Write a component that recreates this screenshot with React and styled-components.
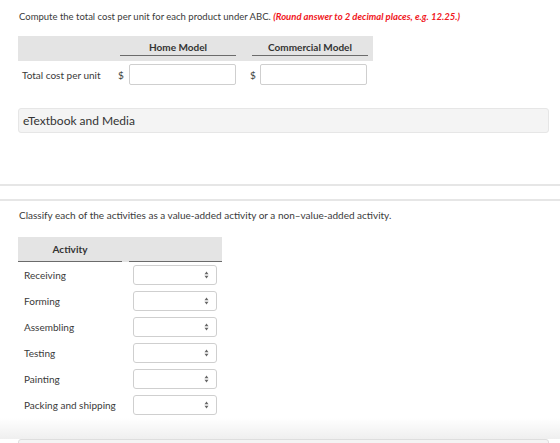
import React from 'react';
import styled, { createGlobalStyle } from 'styled-components';

const GlobalStyle = createGlobalStyle`
  html, body {
    margin: 0;
    padding: 0;
    background: #fff;
  }
  body {
    font-family: Lato, "Open Sans", Arial, sans-serif;
    color: #333;
    width: 560px;
    height: 443px;
    overflow: hidden;
  }
`;

const Page = styled.div`
  display: flex;
  flex-direction: column;
`;

const Prompt = styled.p`
  margin: 0;
  padding: ${(p) => p.$pad};
  font-size: ${(p) => p.$size || 9.5}px;
  line-height: 12px;
  color: #3a3a3a;
`;

const Hint = styled.span`
  color: #f0161c;
  font-style: italic;
  font-weight: 700;
`;

const CostTable = styled.div`
  margin: 13px 0 0 18px;
  width: 355px;
`;

const HeadBar = styled.div`
  display: flex;
  align-items: flex-end;
  height: 25px;
  background: #e4e4e4;
  padding-bottom: 5px;
  box-sizing: border-box;
`;

const HeadCell = styled.div`
  width: ${(p) => p.$w}px;
  margin-left: ${(p) => p.$ml || 0}px;
  text-align: center;
  font-size: 10px;
  font-weight: 700;
  color: #333;
  line-height: 12px;
  padding-bottom: 2px;
  border-bottom: 1.5px solid #6b6b6b;
`;

const CostRow = styled.div`
  display: flex;
  align-items: center;
  height: 27px;
`;

const RowLabel = styled.div`
  width: 95px;
  padding-left: 4px;
  box-sizing: border-box;
  font-size: 10px;
  color: #3a3a3a;
`;

const Dollar = styled.span`
  width: ${(p) => p.$w}px;
  margin-left: ${(p) => p.$ml}px;
  font-size: 10px;
  color: #3a3a3a;
`;

const MoneyInput = styled.div`
  width: 107px;
  height: 21px;
  box-sizing: border-box;
  border: 1px solid #cfcfcf;
  border-radius: 2px;
  background: #fff;
`;

const MediaBox = styled.div`
  margin: 20px 11px 0 18px;
  height: 25px;
  box-sizing: border-box;
  display: flex;
  align-items: center;
  padding-left: 4px;
  background: #f4f4f4;
  border: 1px solid #e6e6e6;
  border-radius: 3px;
  font-size: 12px;
  color: #333;
`;

const Divider = styled.div`
  height: 13px;
  margin-top: ${(p) => p.$mt}px;
  border-top: 2px solid #e6e6e6;
  border-bottom: 2px solid #e6e6e6;
`;

const ActivityTable = styled.div`
  margin: 16px 0 0 18px;
  width: 204px;
`;

const ActivityHead = styled.div`
  display: flex;
  justify-content: space-between;
  align-items: flex-end;
  height: 25px;
  background: #e4e4e4;
`;

const ActivityHeadCell = styled.div`
  width: ${(p) => p.$w}px;
  text-align: center;
  font-size: 10px;
  font-weight: 700;
  color: #333;
  line-height: 12px;
  padding-bottom: 6px;
  border-bottom: 1.5px solid #6b6b6b;
`;

const ActivityRow = styled.div`
  display: flex;
  align-items: center;
  height: 26px;
`;

const ActivityName = styled.div`
  width: 115px;
  padding-left: 6px;
  box-sizing: border-box;
  font-size: 10px;
  color: #3a3a3a;
`;

const SelectBox = styled.div`
  width: 84px;
  height: 20px;
  box-sizing: border-box;
  border: 1px solid #cfcfcf;
  border-radius: 3px;
  background: #fff;
  display: flex;
  align-items: center;
  justify-content: flex-end;
  padding-right: 7px;
`;

const BottomFade = styled.div`
  height: 21px;
  background: linear-gradient(#ffffff, #efefef);
`;

const NextBox = styled.div`
  margin: 0 11px 0 18px;
  height: 20px;
  background: #f4f4f4;
  border: 1px solid #dedede;
  border-radius: 3px;
`;

const Arrows = () => (
  <svg width="5" height="8" viewBox="0 0 5 8">
    <path d="M2.5 0.5 L4.5 3.2 L0.5 3.2 Z" fill="#666" />
    <path d="M2.5 7.5 L4.5 4.8 L0.5 4.8 Z" fill="#666" />
  </svg>
);

const activities = [
  'Receiving',
  'Forming',
  'Assembling',
  'Testing',
  'Painting',
  'Packing and shipping',
];

const App = () => {
  return (
    <Page>
      <GlobalStyle />
      <Prompt $pad="11px 0 0 19px">
        Compute the total cost per unit for each product under ABC.{' '}
        <Hint>(Round answer to 2 decimal places, e.g. 12.25.)</Hint>
      </Prompt>

      <CostTable>
        <HeadBar>
          <HeadCell $w={116} $ml={102}>Home Model</HeadCell>
          <HeadCell $w={116} $ml={16}>Commercial Model</HeadCell>
        </HeadBar>
        <CostRow>
          <RowLabel>Total cost per unit</RowLabel>
          <Dollar $w={11} $ml={5}>$</Dollar>
          <MoneyInput />
          <Dollar $w={10} $ml={14}>$</Dollar>
          <MoneyInput />
        </CostRow>
      </CostTable>

      <MediaBox>eTextbook and Media</MediaBox>

      <Divider $mt={51} />

      <Prompt $pad="8px 0 0 19px" $size={10}>
        Classify each of the activities as a value-added activity or a non–value-added activity.
      </Prompt>

      <ActivityTable>
        <ActivityHead>
          <ActivityHeadCell $w={104}>Activity</ActivityHeadCell>
          <ActivityHeadCell $w={93}>&nbsp;</ActivityHeadCell>
        </ActivityHead>
        {activities.map((name) => (
          <ActivityRow key={name}>
            <ActivityName>{name}</ActivityName>
            <SelectBox>
              <Arrows />
            </SelectBox>
          </ActivityRow>
        ))}
      </ActivityTable>

      <BottomFade />
      <NextBox />
    </Page>
  );
};

export default App;
